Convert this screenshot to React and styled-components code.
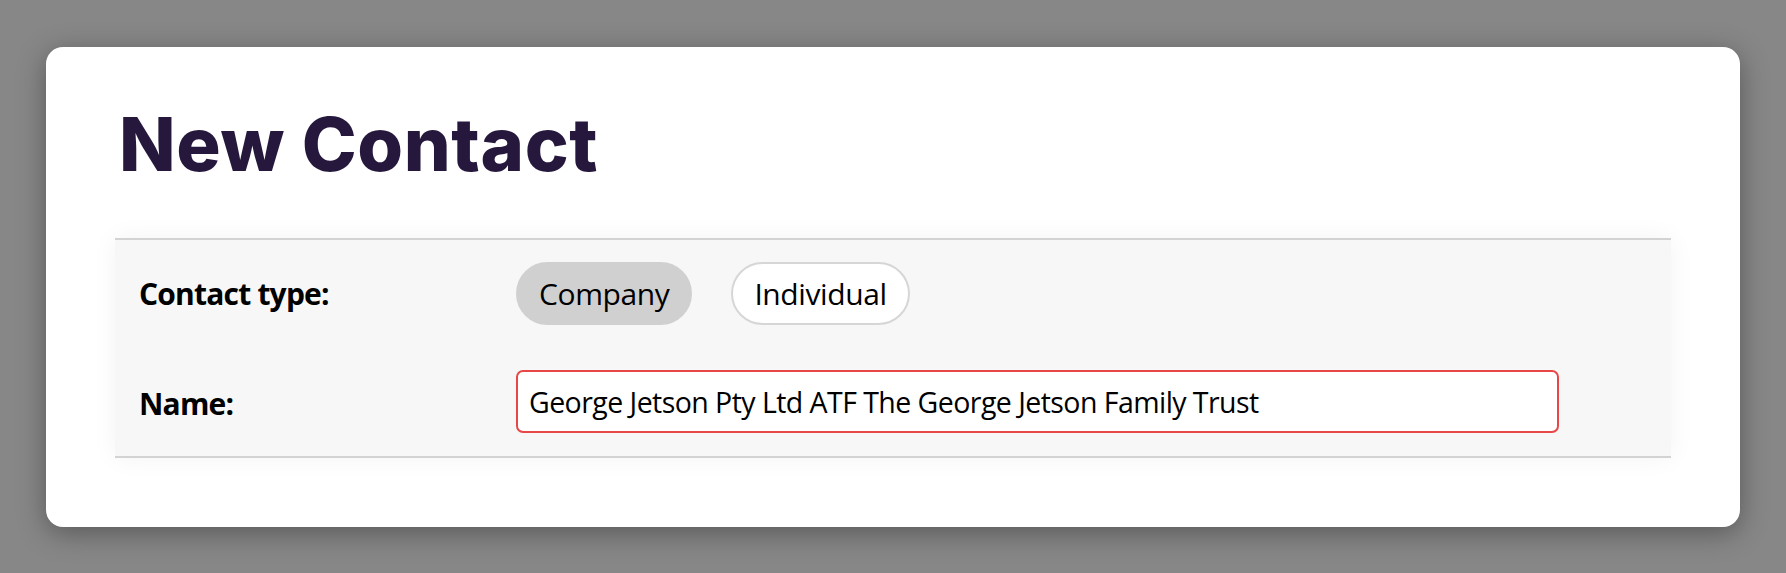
import React, { useState } from 'react';
import styled, { createGlobalStyle } from 'styled-components';

const GlobalStyle = createGlobalStyle`
    html, body {
        margin: 0;
        padding: 0;
        background: #878787;
    }
    * { box-sizing: border-box; }
`

const Page = styled.div`
    width: 1786px;
    height: 573px;
    padding: 47px 46px 0 46px;
    background: #878787;
`

const Card = styled.div`
    width: 1694px;
    height: 480px;
    background: #fff;
    border-radius: 17px;
    box-shadow: 0 6px 28px rgba(0, 0, 0, 0.35);
    padding: 0 69px;
    display: flex;
    flex-direction: column;
`

const Title = styled.h1`
    margin: 0;
    padding: 52px 0 0 4px;
    height: 191px;
    font-family: Inter, "Liberation Sans", sans-serif;
    font-weight: 800;
    font-size: 74px;
    line-height: 90px;
    color: #26173d;
    letter-spacing: 0.6px;
`

const Panel = styled.div`
    background: #f7f7f7;
    border-top: 2px solid #d3d3d3;
    border-bottom: 2px solid #d3d3d3;
    box-shadow: 0 0 24px rgba(0, 0, 0, 0.05);
    padding: 22px 24px 23px;
    display: flex;
    flex-direction: column;
    gap: 45px;
`

const Row = styled.div`
    display: grid;
    grid-template-columns: 377px 1fr;
    align-items: center;
    height: 63px;
`

const Label = styled.div`
    font-family: "Open Sans", "Liberation Sans", sans-serif;
    font-weight: 700;
    font-size: 30px;
    letter-spacing: -0.8px;
    color: #000;
    padding-top: ${p => p.$offset || 0}px;
`

const Pills = styled.div`
    display: flex;
    gap: 39px;
`

const Pill = styled.button`
    height: 63px;
    padding: 0 21px;
    border-radius: 32px;
    border: 2px solid ${p => (p.$active ? '#d0d0d0' : '#d6d6d6')};
    background: ${p => (p.$active ? '#d0d0d0' : '#fff')};
    font-family: "Open Sans", "Liberation Sans", sans-serif;
    font-size: 30px;
    letter-spacing: -0.4px;
    color: #000;
    cursor: pointer;
`

const Input = styled.input`
    width: 1043px;
    height: 63px;
    border: 2px solid #e84747;
    border-radius: 7px;
    background: #fff;
    padding: 0 11px;
    font-family: "Open Sans", "Liberation Sans", sans-serif;
    font-size: 28.5px;
    letter-spacing: -0.55px;
    color: #000;
    outline: none;
    caret-color: #000;
`

function App() {
    const [type, setType] = useState('company');
    const [name, setName] = useState('George Jetson Pty Ltd ATF The George Jetson Family Trust');

    return (
        <>
            <GlobalStyle />
            <Page>
                <Card>
                    <Title>New Contact</Title>
                    <Panel>
                        <Row>
                            <Label>Contact type:</Label>
                            <Pills>
                                <Pill $active={type === 'company'} onClick={() => setType('company')}>Company</Pill>
                                <Pill $active={type === 'individual'} onClick={() => setType('individual')}>Individual</Pill>
                            </Pills>
                        </Row>
                        <Row>
                            <Label $offset={3}>Name:</Label>
                            <Input autoFocus value={name} onChange={e => setName(e.target.value)} />
                        </Row>
                    </Panel>
                </Card>
            </Page>
        </>
    )
}

export default App;
